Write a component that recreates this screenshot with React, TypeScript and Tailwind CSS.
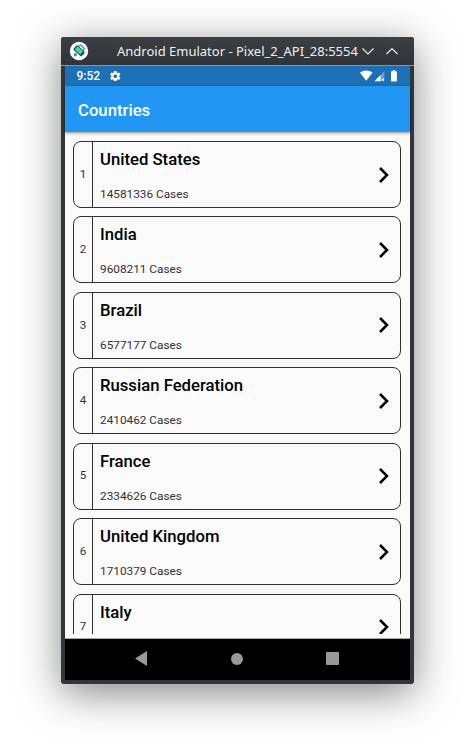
type Country = { name: string; cases?: number };

const countries: Country[] = [
  { name: 'United States', cases: 14581336 },
  { name: 'India', cases: 9608211 },
  { name: 'Brazil', cases: 6577177 },
  { name: 'Russian Federation', cases: 2410462 },
  { name: 'France', cases: 2334626 },
  { name: 'United Kingdom', cases: 1710379 },
  { name: 'Italy' },
];

function EmulatorLogo() {
  return (
    <svg className="ml-2 shrink-0" width="20" height="20" viewBox="0 0 20 20">
      <circle cx="10" cy="10" r="9.2" fill="#fff" />
      <circle cx="6.300" cy="13.700" r="1.700" fill="#4285f4" />
      <path d="M9.500 4.800l2.500-.6 3.500 3.600-1.200 1.400M12 15.300l3.300-3.600" fill="none" stroke="#5b93f5" strokeWidth="1.500" />
      <rect x="4.700" y="6.500" width="10.600" height="6.200" rx="1.400" transform="rotate(42 10 9.600)" fill="#124b4c" />
      <rect x="6" y="7.300" width="7.600" height="4.400" rx=".4" transform="rotate(42 10 9.600)" fill="#3ddc97" />
    </svg>
  );
}

function TitleBar() {
  return (
    <header className="flex h-[29px] shrink-0 items-center border-b border-[#3daee9] bg-gradient-to-b from-[#3b4045] to-[#2f3438]">
      <EmulatorLogo />
      <span className="ml-[28px] w-[241px] whitespace-nowrap font-['Noto_Sans',sans-serif] text-[13px] leading-none text-[#eff0f1]">
        Android Emulator - Pixel_2_API_28:5554
      </span>
      <svg className="ml-[3px]" width="37" height="12" viewBox="0 0 37 12" fill="none" stroke="#eff0f1" strokeWidth="1.100">
        <path d="M1.500 3.500L7 9l5.500-5.500M25.500 9L31 3.500 36.500 9" />
      </svg>
    </header>
  );
}

function StatusBar() {
  return (
    <div className="flex h-5 shrink-0 items-center bg-[#1c70b6] text-white">
      <span className="ml-[11.500px] w-[24px] text-[12px] font-medium leading-none">9:52</span>
      <svg className="ml-[9.500px]" width="10.500" height="10.500" viewBox="2 2 20 20" fill="currentColor">
        <path d="M19.43 12.98c.04-.32.07-.64.07-.98s-.03-.66-.07-.98l2.110-1.650c.19-.15.24-.42.12-.64l-2-3.460c-.12-.22-.39-.3-.61-.22l-2.490 1c-.52-.4-1.080-.73-1.690-.98l-.38-2.650A.488.488 0 0 0 14 2h-4c-.25 0-.46.18-.49.42l-.38 2.650c-.61.25-1.170.59-1.690.98l-2.490-1c-.23-.09-.49 0-.61.22l-2 3.460c-.13.22-.07.49.12.64l2.110 1.650c-.04.32-.07.65-.07.98s.03.66.07.98l-2.110 1.650c-.19.15-.24.42-.12.64l2 3.460c.12.22.39.3.61.22l2.490-1c.52.4 1.080.73 1.690.98l.38 2.650c.03.24.24.42.49.42h4c.25 0 .46-.18.49-.42l.38-2.650c.61-.25 1.170-.59 1.690-.98l2.490 1c.23.09.49 0 .61-.22l2-3.460c.12-.22.07-.49-.12-.64zM12 15.500a3.500 3.500 0 1 1 0-7 3.500 3.500 0 0 1 0 7z" />
      </svg>
      <svg className="ml-auto mr-[12px]" width="39" height="12" viewBox="0 0 39 12" fill="currentColor">
        <path d="M1 2.800C4.500-.2 10 -.2 13.500 2.800L7.200 10.800z" />
        <path d="M15.500 11.200L25.300 1v10.200z" opacity=".35" />
        <path d="M15.500 11.200l6-6.200v6.200zM23.200 8.700h1.700v2h-1.700z" />
        <path d="M32 2q0-.7.700-.7h1V.3h2.500v1h1q.7 0 .7.700v8.700q0 .7-.7.700h-4.500q-.7 0-.7-.7z" />
      </svg>
    </div>
  );
}

function CountryCard({ rank, name, cases }: Country & { rank: number }) {
  return (
    <li className="flex h-[67px] shrink-0 overflow-hidden rounded-[8px] border border-[#303030]">
      <div className="flex w-[19px] shrink-0 items-center justify-center border-r border-[#303030] text-[11.700px] text-[#333]">
        {rank}
      </div>
      <div className="flex flex-1 flex-col justify-between pb-[6px] pl-[7px] pt-[8px]">
        <h2 className="text-[16.700px] font-medium leading-[20px] text-black">{name}</h2>
        {cases !== undefined && (
          <p className="text-[11.800px] leading-[14px] text-[#333]">{cases} Cases</p>
        )}
      </div>
      <svg className="mr-[9px] self-center" width="13" height="16" viewBox="0 0 13 16" fill="none" stroke="#000" strokeWidth="2.500">
        <path d="M2 1l7 7-7 7" />
      </svg>
    </li>
  );
}

function NavigationBar() {
  return (
    <nav className="flex h-[41px] shrink-0 items-center bg-black pb-[2px]">
      <svg className="ml-[70px]" width="12" height="15" viewBox="0 0 12 15">
        <path d="M0 7.500L12 0v15z" fill="#999" />
      </svg>
      <div className="ml-[84px] size-[12px] rounded-full bg-[#999]" />
      <div className="ml-[83px] size-[13px] rounded-[1px] bg-[#999]" />
    </nav>
  );
}

export default function App() {
  return (
    <main className="h-[745px] w-[475px] overflow-hidden bg-white pl-[61px] pt-[37px] font-[Roboto,sans-serif]">
      <div className="flex h-[647px] w-[353px] flex-col overflow-hidden rounded-[3px] bg-[#31363b] shadow-[0_9px_42px_rgba(35,38,41,0.56)]">
        <TitleBar />
        <div className="mx-1 mb-1 flex min-h-0 flex-1 flex-col">
          <StatusBar />
          <div className="z-10 flex h-[46px] shrink-0 items-center bg-[#2196f3] pl-[13px] pt-[3px] text-[16.700px] font-medium text-white shadow-[0_1px_3px_rgba(0,0,0,0.45)]">
            Countries
          </div>
          <div className="min-h-0 flex-1 border-b border-[#aaa] bg-[#fafafa] pb-[4px]">
            <ul className="flex h-full flex-col gap-[8.450px] overflow-hidden pl-2 pr-[9px] pt-[9px]">
              {countries.map((country, index) => (
                <CountryCard key={country.name} rank={index + 1} {...country} />
              ))}
            </ul>
          </div>
          <NavigationBar />
        </div>
      </div>
    </main>
  );
}
